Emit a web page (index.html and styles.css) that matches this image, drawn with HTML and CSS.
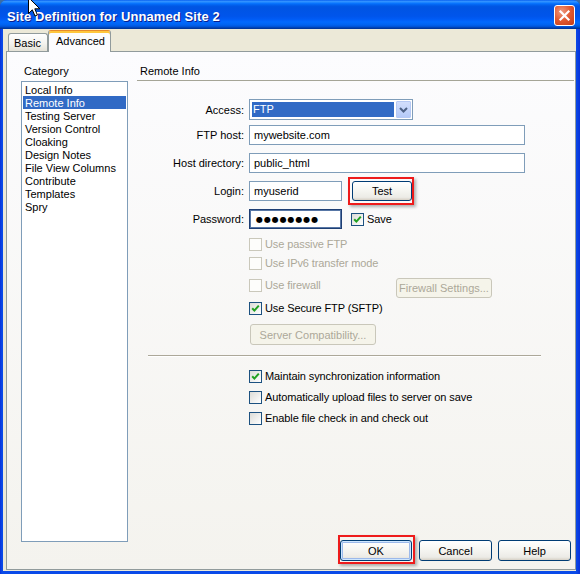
FILE: index.html
```html
<!DOCTYPE html>
<html>
<head>
<meta charset="utf-8">
<title>Site Definition</title>
<link rel="stylesheet" href="styles.css">
</head>
<body>
<div class="window">
  <div class="titlebar">
    <span class="title">Site Definition for Unnamed Site 2</span>
    <div class="close">
      <svg width="13" height="13" viewBox="0 0 13 13"><path d="M2.5 2.5 L10.5 10.5 M10.5 2.5 L2.5 10.5" stroke="#fff" stroke-width="2.2" stroke-linecap="square"/></svg>
    </div>
  </div>
  <div class="client">
    <div class="tabs">
      <div class="tab basic">Basic</div>
      <div class="tab active">Advanced</div>
    </div>
    <div class="panel">
      <div class="leftcol">
        <div class="cat-label">Category</div>
        <div class="listbox">
          <div class="item">Local Info</div>
          <div class="item selected">Remote Info</div>
          <div class="item">Testing Server</div>
          <div class="item">Version Control</div>
          <div class="item">Cloaking</div>
          <div class="item">Design Notes</div>
          <div class="item">File View Columns</div>
          <div class="item">Contribute</div>
          <div class="item">Templates</div>
          <div class="item">Spry</div>
        </div>
      </div>
      <div class="rightcol">
        <div class="heading">Remote Info</div>
        <div class="form">
          <div class="row r1">
            <div class="lbl">Access:</div>
            <div class="select">
              <div class="value">FTP</div>
              <div class="dd"><svg width="13" height="15" viewBox="0 0 13 15"><polyline points="3,6 6.5,9.5 10,6" fill="none" stroke="#4D6185" stroke-width="2"/></svg></div>
            </div>
          </div>
          <div class="row r2">
            <div class="lbl">FTP host:</div>
            <div class="input wide">mywebsite.com</div>
          </div>
          <div class="row r3">
            <div class="lbl">Host directory:</div>
            <div class="input wide">public_html</div>
          </div>
          <div class="row r4">
            <div class="lbl">Login:</div>
            <div class="input short">myuserid</div>
            <div class="btn test hl-test">Test</div>
          </div>
          <div class="row r5">
            <div class="lbl">Password:</div>
            <div class="input short pass"><span class="dots">●●●●●●●●</span></div>
            <div class="cb save-cb"><svg width="9" height="9" viewBox="0 0 9 9"><polyline points="1.2,4.2 3.4,6.6 7.8,1.6" fill="none" stroke="#21A121" stroke-width="2"/></svg></div>
            <span class="cbl">Save</span>
          </div>

          <div class="opts">
            <div class="cbrow passive"><div class="cb disabled"></div><span class="cbl dis">Use passive FTP</span></div>
            <div class="cbrow ipv6"><div class="cb disabled"></div><span class="cbl dis">Use IPv6 transfer mode</span></div>
            <div class="fwrow">
              <div class="fwleft"><div class="cb disabled"></div><span class="cbl dis">Use firewall</span></div>
              <div class="btn disabled fwbtn">Firewall Settings...</div>
            </div>
            <div class="cbrow sftp"><div class="cb"><svg width="9" height="9" viewBox="0 0 9 9"><polyline points="1.2,4.2 3.4,6.6 7.8,1.6" fill="none" stroke="#21A121" stroke-width="2"/></svg></div><span class="cbl">Use Secure FTP (SFTP)</span></div>
            <div class="btn disabled compat">Server Compatibility...</div>
          </div>

          <div class="sep"></div>

          <div class="opts">
            <div class="cbrow sync"><div class="cb"><svg width="9" height="9" viewBox="0 0 9 9"><polyline points="1.2,4.2 3.4,6.6 7.8,1.6" fill="none" stroke="#21A121" stroke-width="2"/></svg></div><span class="cbl">Maintain synchronization information</span></div>
            <div class="cbrow auto"><div class="cb"></div><span class="cbl">Automatically upload files to server on save</span></div>
            <div class="cbrow auto"><div class="cb"></div><span class="cbl">Enable file check in and check out</span></div>
          </div>
        </div>
        <div class="buttons">
          <div class="btn default ok hl-ok">OK</div>
          <div class="btn cancel">Cancel</div>
          <div class="btn help">Help</div>
        </div>
      </div>
    </div>
  </div>
  <svg class="cursor" width="13" height="21" viewBox="0 0 13 21"><polygon points="0.5,0.5 0.5,16.5 4.3,12.8 7,19 9.4,18 6.8,11.8 11.8,11.8" fill="#fff" stroke="#000" stroke-width="1" stroke-linejoin="miter"/></svg>
</div>
</body>
</html>
```

FILE: styles.css
```css
* { box-sizing: border-box; }
html, body { margin: 0; padding: 0; }
body {
  width: 580px;
  height: 574px;
  overflow: hidden;
  background: #3A6EA5;
  font-family: "Liberation Sans", Arial, sans-serif;
  font-size: 11px;
  color: #000;
}
.window {
  position: relative;
  width: 580px;
  height: 574px;
  display: flex;
  flex-direction: column;
  background: linear-gradient(to right, #0831D9 0px, #0A4AE8 2px, #0A4AE8 576px, #0831D9 580px);
  border-radius: 7px 7px 0 0;
  overflow: hidden;
}
.titlebar {
  height: 29px;
  flex: none;
  display: flex;
  align-items: center;
  justify-content: space-between;
  padding: 0 5px 0 7px;
  background: linear-gradient(to bottom, #0058EE 0%, #3593FF 4%, #288EFF 7%, #127DFF 10%, #036FFC 13%, #0262EE 17%, #0057E5 22%, #0054E3 27%, #0055EB 56%, #005BF5 66%, #026AFE 76%, #0062EF 86%, #0052D6 92%, #0040AB 96%, #003092 100%);
}
.title {
  color: #fff;
  font-weight: bold;
  font-size: 13px;
  letter-spacing: 0.1px;
  text-shadow: 1px 1px 0 #0A1E8C;
  padding-top: 3px;
}
.close {
  width: 21px;
  height: 21px;
  margin-top: 1px;
  border: 1px solid #fff;
  border-radius: 3px;
  background: radial-gradient(circle at 35% 30%, #EE9A80 0%, #E0582F 50%, #C43C16 100%);
  display: flex;
  align-items: center;
  justify-content: center;
}
.client {
  flex: 1;
  margin: 0 4px 3px 3px;
  background: #ECE9D8;
  padding: 0 0 1px 3px;
  display: flex;
  flex-direction: column;
}
.tabs {
  height: 22px;
  flex: none;
  display: flex;
  align-items: flex-end;
  padding-left: 2px;
  position: relative;
  z-index: 1;
}
.tab {
  border: 1px solid #919B9C;
  border-bottom: none;
  border-radius: 3px 3px 0 0;
  display: flex;
  align-items: center;
  line-height: 13px;
}
.tab.basic {
  width: 40px;
  height: 18px;
  padding: 1px 0 0 5px;
  background: linear-gradient(#FFFFFF, #F3F3EF 55%, #E4E2D7);
}
.tab.active {
  width: 63px;
  height: 22px;
  margin-bottom: -1px;
  padding: 0 0 1px 7px;
  background: #FCFCFE;
  border-top: 1px solid #E68B2C;
  box-shadow: inset 0 2px 0 #FFC73C;
}
.panel {
  flex: 1;
  display: flex;
  border: 1px solid #919B9C;
  background: linear-gradient(#FCFCFE, #F4F3EE);
  padding: 13px 0 0 14px;
}
.leftcol {
  width: 107px;
  flex: none;
  display: flex;
  flex-direction: column;
}
.cat-label {
  line-height: 13px;
  height: 13px;
  padding-left: 3px;
}
.listbox {
  margin-top: 3px;
  height: 461px;
  border: 1px solid #7F9DB9;
  background: #fff;
  padding: 1px;
}
.item {
  height: 13px;
  line-height: 14px;
  padding-left: 2px;
  white-space: nowrap;
}
.item.selected {
  background: #316AC5;
  color: #fff;
}
.rightcol {
  flex: 1;
  margin-left: 9px;
  display: flex;
  flex-direction: column;
  padding-bottom: 8px;
}
.heading {
  height: 16px;
  line-height: 13px;
  padding-left: 3px;
  margin-right: 1px;
  border-bottom: 1px solid #A5A597;
}
.form {
  margin-top: 18px;
  display: flex;
  flex-direction: column;
}
.row {
  display: flex;
  align-items: center;
}
.r2 { margin-top: 5px; }
.r3, .r4, .r5 { margin-top: 8px; }
.lbl {
  width: 107px;
  margin-right: 5px;
  text-align: right;
  white-space: nowrap;
}
.select {
  width: 164px;
  height: 21px;
  border: 1px solid #7F9DB9;
  background: #fff;
  padding: 1px;
  display: flex;
}
.select .value {
  margin: 1px 0 1px 1px;
  width: 142px;
  background: #316AC5;
  color: #fff;
  line-height: 15px;
  padding-left: 1px;
}
.select .dd {
  margin-left: 2px;
  width: 15px;
  height: 17px;
  border: 1px solid #B6C9F4;
  border-radius: 1px;
  background: linear-gradient(#D2DEFC, #B5CAF8);
  display: flex;
  align-items: center;
  justify-content: center;
}
.input {
  height: 20px;
  border: 1px solid #7F9DB9;
  background: #fff;
  padding-left: 4px;
  display: flex;
  align-items: center;
  white-space: nowrap;
}
.input.wide { width: 276px; }
.input.short { width: 93px; }
.input.pass {
  border-color: #1E3E73;
  box-shadow: inset 0 0 0 1px #5877A6;
}
.dots {
  font-family: "DejaVu Sans", sans-serif;
  font-size: 8px;
  letter-spacing: 0.9px;
  padding-left: 2px;
}
.btn {
  position: relative;
  height: 21px;
  border: 1px solid #003C74;
  border-radius: 3px;
  background: linear-gradient(#FFFFFF, #F6F6F2 45%, #ECEBE6 85%, #D6D0C5);
  display: flex;
  align-items: center;
  justify-content: center;
  white-space: nowrap;
}
.btn.disabled {
  border-color: #C9C7BA;
  background: #F5F4EA;
  color: #ACA899;
}
.btn.default {
  box-shadow: inset 0 0 0 1px #CEE7FF, inset 0 0 0 2px #9CB9EA;
}
.test {
  width: 60px;
  height: 20px;
  margin-left: 10px;
}
.hl-test::after, .hl-ok::after {
  content: "";
  position: absolute;
  border: 2px solid #EE1B1B;
  box-shadow: 2px 2px 3px rgba(0, 0, 0, 0.3);
  pointer-events: none;
}
.hl-test::after { left: -5px; right: -3px; top: -5px; bottom: -5px; }
.hl-ok::after { left: -3px; right: -4px; top: -6px; bottom: -4px; }
.cb {
  width: 13px;
  height: 13px;
  flex: none;
  border: 1px solid #1C5180;
  background: linear-gradient(135deg, #DCDCD7, #FFFFFF);
  display: flex;
  align-items: center;
  justify-content: center;
}
.cb.disabled {
  border-color: #CAC8BB;
  background: #FDFDFB;
}
.save-cb { margin-left: 9px; }
.cbl {
  margin-left: 3px;
  line-height: 13px;
  white-space: nowrap;
  letter-spacing: -0.1px;
}
.cbl.dis { color: #ACA899; }
.opts {
  margin-left: 112px;
  display: flex;
  flex-direction: column;
  align-items: flex-start;
}
.cbrow {
  display: flex;
  align-items: center;
  height: 13px;
}
.passive { margin-top: 9px; }
.ipv6 { margin-top: 6px; }
.fwrow {
  margin-top: 8px;
  display: flex;
  align-items: flex-start;
}
.fwleft {
  width: 147px;
  display: flex;
  align-items: center;
  margin-top: 1px;
}
.fwbtn {
  width: 96px;
  height: 20px;
}
.sftp { margin-top: 4px; }
.compat {
  margin-top: 9px;
  margin-left: 1px;
  width: 126px;
}
.sep {
  margin: 10px 0 0 11px;
  width: 393px;
  height: 2px;
  border-top: 1px solid #ACA899;
  border-bottom: 1px solid #FFFFFF;
}
.sync { margin-top: 13px; }
.auto { margin-top: 8px; }
.buttons {
  margin-top: auto;
  margin-right: 4px;
  display: flex;
  justify-content: flex-end;
}
.ok { width: 72px; }
.cancel { width: 73px; margin-left: 7px; }
.help { width: 73px; margin-left: 6px; }
.cursor {
  position: absolute;
  left: 28px;
  top: -3px;
}
```
